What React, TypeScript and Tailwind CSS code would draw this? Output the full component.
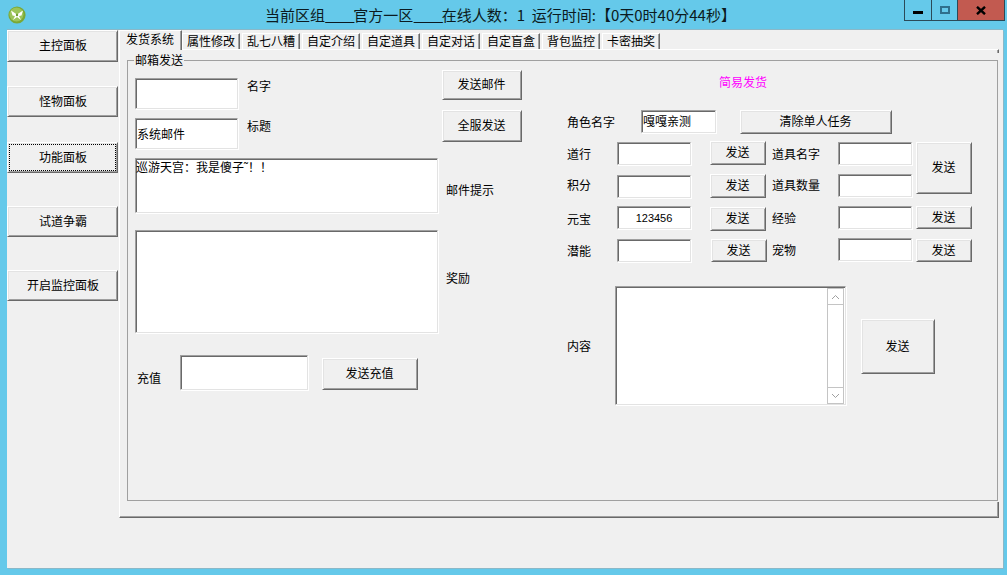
import React from "react";

const raised =
  "bg-[#f0f0f0] border border-t-white border-l-white border-r-[#696969] border-b-[#696969] shadow-[inset_1px_1px_0_#e3e3e3,inset_-1px_-1px_0_#a0a0a0] flex items-center justify-center shrink-0 text-black pb-[2px] pr-[1px]";
const sunken =
  "bg-white border border-t-[#a0a0a0] border-l-[#a0a0a0] border-r-[#e3e3e3] border-b-[#e3e3e3] shadow-[inset_1px_1px_0_#696969,1px_1px_0_#ffffff] shrink-0";

function Btn({ className, children }: { className: string; children: React.ReactNode }) {
  return <button className={`${raised} ${className}`}>{children}</button>;
}
function Box({ className, children }: { className: string; children?: React.ReactNode }) {
  return <div className={`${sunken} ${className}`}>{children}</div>;
}
function Label({ className, children }: { className: string; children: React.ReactNode }) {
  return <span className={`block leading-[14px] shrink-0 ${className}`}>{children}</span>;
}

const otherTabs = ["属性修改", "乱七八糟", "自定介绍", "自定道具", "自定对话", "自定盲盒", "背包监控", "卡密抽奖"];

function Logo() {
  return (
    <svg width="18" height="18" viewBox="0 0 18 18" className="shrink-0">
      <circle cx="9" cy="9" r="8.6" fill="#7aa836" />
      <circle cx="8.5" cy="8.5" r="7" fill="#9cc45a" />
      <path d="M3 4.5 L9 8.4 L15 4.5 L13.5 9.5 L11 10 L13 14 L9 11 L5 14 L7 10 L4.5 9.5 Z" fill="#ffffff" />
      <circle cx="9" cy="9" r="1.2" fill="#6f9c30" />
    </svg>
  );
}

function Scrollbar() {
  return (
    <div className="ml-auto mr-px mt-px w-[17px] h-[116px] border border-[#c4c4c4] flex flex-col bg-white">
      <div className="h-[16px] border-b border-[#c4c4c4] flex items-center justify-center">
        <svg width="9" height="6" viewBox="0 0 9 6"><path d="M1 5 L4.5 1.5 L8 5" stroke="#a0a0a0" fill="none" /></svg>
      </div>
      <div className="flex-1" />
      <div className="h-[16px] border-t border-[#c4c4c4] flex items-center justify-center">
        <svg width="9" height="6" viewBox="0 0 9 6"><path d="M1 1 L4.5 4.5 L8 1" stroke="#a0a0a0" fill="none" /></svg>
      </div>
    </div>
  );
}

export default function App() {
  return (
    <div
      className="w-[1007px] h-[575px] bg-[#65c9ea] overflow-hidden text-[12px] text-black flex flex-col"
      style={{ fontFamily: '"Noto Sans CJK SC", "Liberation Sans", sans-serif' }}
    >
      {/* title bar */}
      <div className="h-[30px] flex items-start shrink-0">
        <div className="ml-[8px] mt-[6px]"><Logo /></div>
        <div className="ml-[239px] mt-[5px] text-[15px] leading-[20px] whitespace-pre text-[#0b1a20]">
          当前区组<span className="tracking-[-1.3px]">____</span>官方一区<span className="tracking-[-1.3px]">____</span>在线人数：1{"  "}运行时间:【0天0时40分44秒】
        </div>
        <div className="ml-auto mr-[2px] h-[21px] w-[101px] flex border border-t-0 border-[#2b4a58]">
          <div className="w-[27px] border-r border-[#2b4a58] flex items-center justify-center">
            <div className="w-[10px] h-[3px] bg-black mt-[5px]" />
          </div>
          <div className="w-[26px] border-r border-[#2b4a58] flex items-center justify-center">
            <div className="w-[10px] h-[8px] border-2 border-[#2f6f8c]" />
          </div>
          <div className="flex-1 bg-[#c25a50] flex items-center justify-center">
            <svg width="10" height="9" viewBox="0 0 10 9">
              <path d="M1 0.8 L9 8.2 M9 0.8 L1 8.2" stroke="#000" strokeWidth="2.4" />
            </svg>
          </div>
        </div>
      </div>

      {/* client area */}
      <div className="ml-[7px] w-[996px] h-[538px] bg-[#f0f0f0] flex items-start shadow-[1px_1px_0_#8ab8c8,0_-1px_0_#8ab8c8]">
        {/* sidebar */}
        <div className="w-[112px] flex flex-col shrink-0">
          <Btn className="w-[111px] h-[32px] pl-[2px]">主控面板</Btn>
          <Btn className="w-[111px] h-[31px] mt-[24px] pl-[2px]">怪物面板</Btn>
          <Btn className="w-[111px] h-[31px] mt-[25px] pl-[2px] outline-1 outline-dotted outline-black -outline-offset-[3px]">功能面板</Btn>
          <Btn className="w-[111px] h-[31px] mt-[33px] pl-[2px]">试道争霸</Btn>
          <Btn className="w-[111px] h-[31px] mt-[33px] pl-[2px]">开启监控面板</Btn>
        </div>

        {/* tab control */}
        <div className="w-[880px] flex flex-col">
          <div className="h-[19px] flex items-start">
            <div className="relative z-10 w-[63px] h-[20px] bg-[#f0f0f0] border-l border-t border-l-white border-t-white border-r border-r-[#696969] shadow-[inset_-1px_0_0_#a0a0a0] flex items-center pl-[6px] pb-[3px] leading-[14px]">
              发货系统
            </div>
            {otherTabs.map((t) => (
              <div
                key={t}
                className="mt-[3px] mr-[2px] w-[58px] h-[16px] border-l border-t border-l-white border-t-white border-r border-r-[#696969] shadow-[inset_-1px_0_0_#a0a0a0] flex items-center justify-center pb-[1px] leading-[14px]"
              >
                {t}
              </div>
            ))}
          </div>
          <div className="h-[469px] border-l border-t border-l-white border-t-white border-r border-b border-r-[#696969] border-b-[#696969] shadow-[inset_-1px_-1px_0_#a0a0a0]">
            {/* tab page */}
            <div className="relative mt-[3px] -mr-px h-[449px] bg-[#f0f0f0] pt-[7px] pl-[7px]">
              {/* group box */}
              <div className="relative w-[871px] h-[441px] border border-[#a0a0a0] flex items-start">
                <span className="absolute left-[6px] -top-[8px] bg-[#f0f0f0] px-px leading-[14px]">邮箱发送</span>

                {/* left block */}
                <div className="ml-[7px] w-[387px] shrink-0 flex flex-col">
                  <div className="flex items-start">
                    <div className="w-[307px] mt-[17px] flex flex-col shrink-0">
                      <div className="flex items-start">
                        <Box className="w-[103px] h-[31px]" />
                        <Label className="ml-[9px] mt-[1px]">名字</Label>
                      </div>
                      <div className="flex items-start mt-[9px]">
                        <Box className="w-[103px] h-[31px] pl-[1px] pt-[8px] leading-[14px]">系统邮件</Box>
                        <Label className="ml-[9px] mt-[1px]">标题</Label>
                      </div>
                    </div>
                    <div className="mt-[9px] flex flex-col shrink-0">
                      <Btn className="w-[80px] h-[30px]">发送邮件</Btn>
                      <Btn className="w-[80px] h-[32px] mt-[10px]">全服发送</Btn>
                    </div>
                  </div>
                  <div className="flex items-start mt-[9px]">
                    <Box className="w-[303px] h-[55px] pt-[1px] leading-[14px] whitespace-pre">巡游天宫：我是傻子˜！！</Box>
                    <Label className="ml-[8px] mt-[25px]">邮件提示</Label>
                  </div>
                  <div className="flex items-start mt-[17px]">
                    <Box className="w-[303px] h-[103px]" />
                    <Label className="ml-[8px] mt-[41px]">奖励</Label>
                  </div>
                  <div className="flex items-start mt-[22px]">
                    <Label className="ml-[2px] mt-[16px]">充值</Label>
                    <Box className="ml-[19px] w-[128px] h-[35px]" />
                    <Btn className="ml-[14px] mt-[3px] w-[96px] h-[32px]">发送充值</Btn>
                  </div>
                </div>

                {/* right block */}
                <div className="ml-[45px] flex flex-col">
                  <Label className="ml-[152px] mt-[14px] text-[#ff00ff]">简易发货</Label>

                  <div className="flex items-start mt-[21px]">
                    <Label className="w-[74px] mt-[5px]">角色名字</Label>
                    <Box className="w-[75px] h-[23px] pl-[1px] pt-[3px] leading-[14px]">嘎嘎亲测</Box>
                    <Btn className="ml-[24px] w-[152px] h-[24px]">清除单人任务</Btn>
                  </div>

                  <div className="flex items-start mt-[7px]">
                    <div className="w-[349px] shrink-0 flex flex-col">
                      <div className="flex items-start">
                        <Label className="w-[50px] mt-[6px]">道行</Label>
                        <Box className="w-[74px] h-[23px] mt-[1px]" />
                        <Btn className="ml-[19px] w-[56px] h-[24px]">发送</Btn>
                        <Label className="ml-[6px] w-[66px] mt-[6px]">道具名字</Label>
                        <Box className="w-[74px] h-[23px] mt-[1px]" />
                      </div>
                      <div className="flex items-start mt-[9px]">
                        <Label className="w-[50px] mt-[4px]">积分</Label>
                        <Box className="w-[74px] h-[23px] mt-[1px]" />
                        <Btn className="ml-[19px] w-[56px] h-[24px]">发送</Btn>
                        <Label className="ml-[6px] w-[66px] mt-[4px]">道具数量</Label>
                        <Box className="w-[74px] h-[23px]" />
                      </div>
                    </div>
                    <Btn className="ml-[0px] mt-[1px] w-[56px] h-[52px]">发送</Btn>
                  </div>

                  <div className="flex items-start mt-[8px]">
                    <Label className="w-[50px] mt-[6px]">元宝</Label>
                    <Box className="w-[74px] h-[23px] flex items-center justify-center text-[11px] leading-[14px]">
                      <span style={{ fontFamily: '"Liberation Sans", sans-serif' }}>123456</span>
                    </Box>
                    <Btn className="ml-[19px] mt-[1px] w-[56px] h-[24px]">发送</Btn>
                    <Label className="ml-[6px] w-[66px] mt-[5px]">经验</Label>
                    <Box className="w-[74px] h-[23px]" />
                    <Btn className="ml-[4px] w-[56px] h-[23px]">发送</Btn>
                  </div>

                  <div className="flex items-start mt-[7px]">
                    <Label className="w-[50px] mt-[6px]">潜能</Label>
                    <Box className="w-[74px] h-[23px] mt-[1px]" />
                    <Btn className="ml-[20px] mt-[1px] w-[56px] h-[23px]">发送</Btn>
                    <Label className="ml-[5px] w-[66px] mt-[5px]">宠物</Label>
                    <Box className="w-[74px] h-[23px]" />
                    <Btn className="ml-[4px] mt-[1px] w-[56px] h-[23px]">发送</Btn>
                  </div>

                  <div className="flex items-start mt-[24px]">
                    <Label className="w-[48px] mt-[53px]">内容</Label>
                    <Box className="w-[231px] h-[119px] flex">
                      <Scrollbar />
                    </Box>
                    <Btn className="ml-[15px] mt-[33px] w-[74px] h-[55px]">发送</Btn>
                  </div>
                </div>
              </div>
            </div>
          </div>
        </div>
      </div>
    </div>
  );
}
